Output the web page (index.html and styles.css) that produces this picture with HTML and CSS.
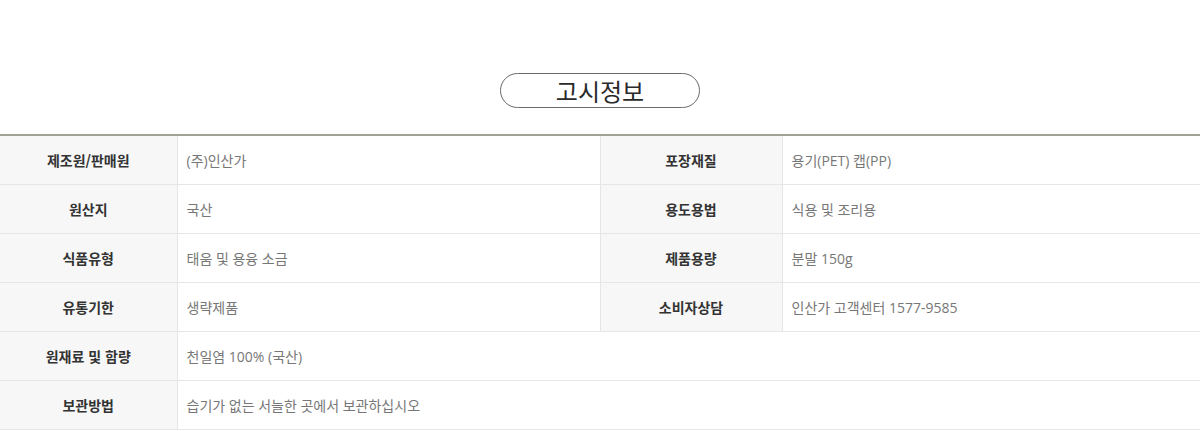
FILE: index.html
```html
<!DOCTYPE html>
<html lang="ko">
<head>
<meta charset="utf-8">
<title>고시정보</title>
<link rel="stylesheet" href="styles.css">
</head>
<body>
<section class="notice">
  <div class="title-wrap"><h2 class="title">고시정보</h2></div>
  <table class="info">
    <colgroup>
      <col class="c-th1"><col class="c-td1"><col class="c-th2"><col>
    </colgroup>
    <tbody>
      <tr><th>제조원/판매원</th><td>(주)인산가</td><th>포장재질</th><td>용기(PET) 캡(PP)</td></tr>
      <tr><th>원산지</th><td>국산</td><th>용도용법</th><td>식용 및 조리용</td></tr>
      <tr><th>식품유형</th><td>태움 및 용융 소금</td><th>제품용량</th><td>분말 150g</td></tr>
      <tr><th>유통기한</th><td>생략제품</td><th>소비자상담</th><td>인산가 고객센터 1577-9585</td></tr>
      <tr><th>원재료 및 함량</th><td colspan="3">천일염 100% (국산)</td></tr>
      <tr><th>보관방법</th><td colspan="3">습기가 없는 서늘한 곳에서 보관하십시오</td></tr>
    </tbody>
  </table>
</section>
</body>
</html>
```
FILE: styles.css
```css
html, body {
  margin: 0;
  padding: 0;
  background: #fff;
}
body {
  font-family: "Noto Sans CJK KR", "Noto Sans", sans-serif;
  color: #333;
}
.notice {
  padding-top: 73px;
}
.title-wrap {
  display: flex;
  justify-content: center;
}
.title {
  margin: 0;
  width: 200px;
  height: 35px;
  box-sizing: border-box;
  border: 1.5px solid #6a6a6a;
  border-radius: 18px;
  display: flex;
  align-items: center;
  justify-content: center;
  font-size: 24px;
  font-weight: 400;
  color: #2a2a2a;
  letter-spacing: 0;
}
.info {
  margin-top: 26px;
  width: 100%;
  border-collapse: collapse;
  table-layout: fixed;
  border-top: 2px solid #9ea394;
}
.c-th1 { width: 177px; }
.c-td1 { width: 423px; }
.c-th2 { width: 182px; }
.info th, .info td {
  height: 49px;
  padding: 0 10px;
  border-bottom: 1px solid #e6e6e6;
  border-left: 1px solid #e6e6e6;
  font-size: 14px;
  box-sizing: border-box;
}
.info tr > :first-child {
  border-left: none;
}
.info th {
  background: #f7f7f7;
  font-weight: 700;
  color: #333;
  text-align: center;
}
.info td {
  font-family: "Open Sans", "Noto Sans CJK KR", sans-serif;
  color: #777;
  font-weight: 400;
  text-align: left;
  padding-left: 9px;
}
```
